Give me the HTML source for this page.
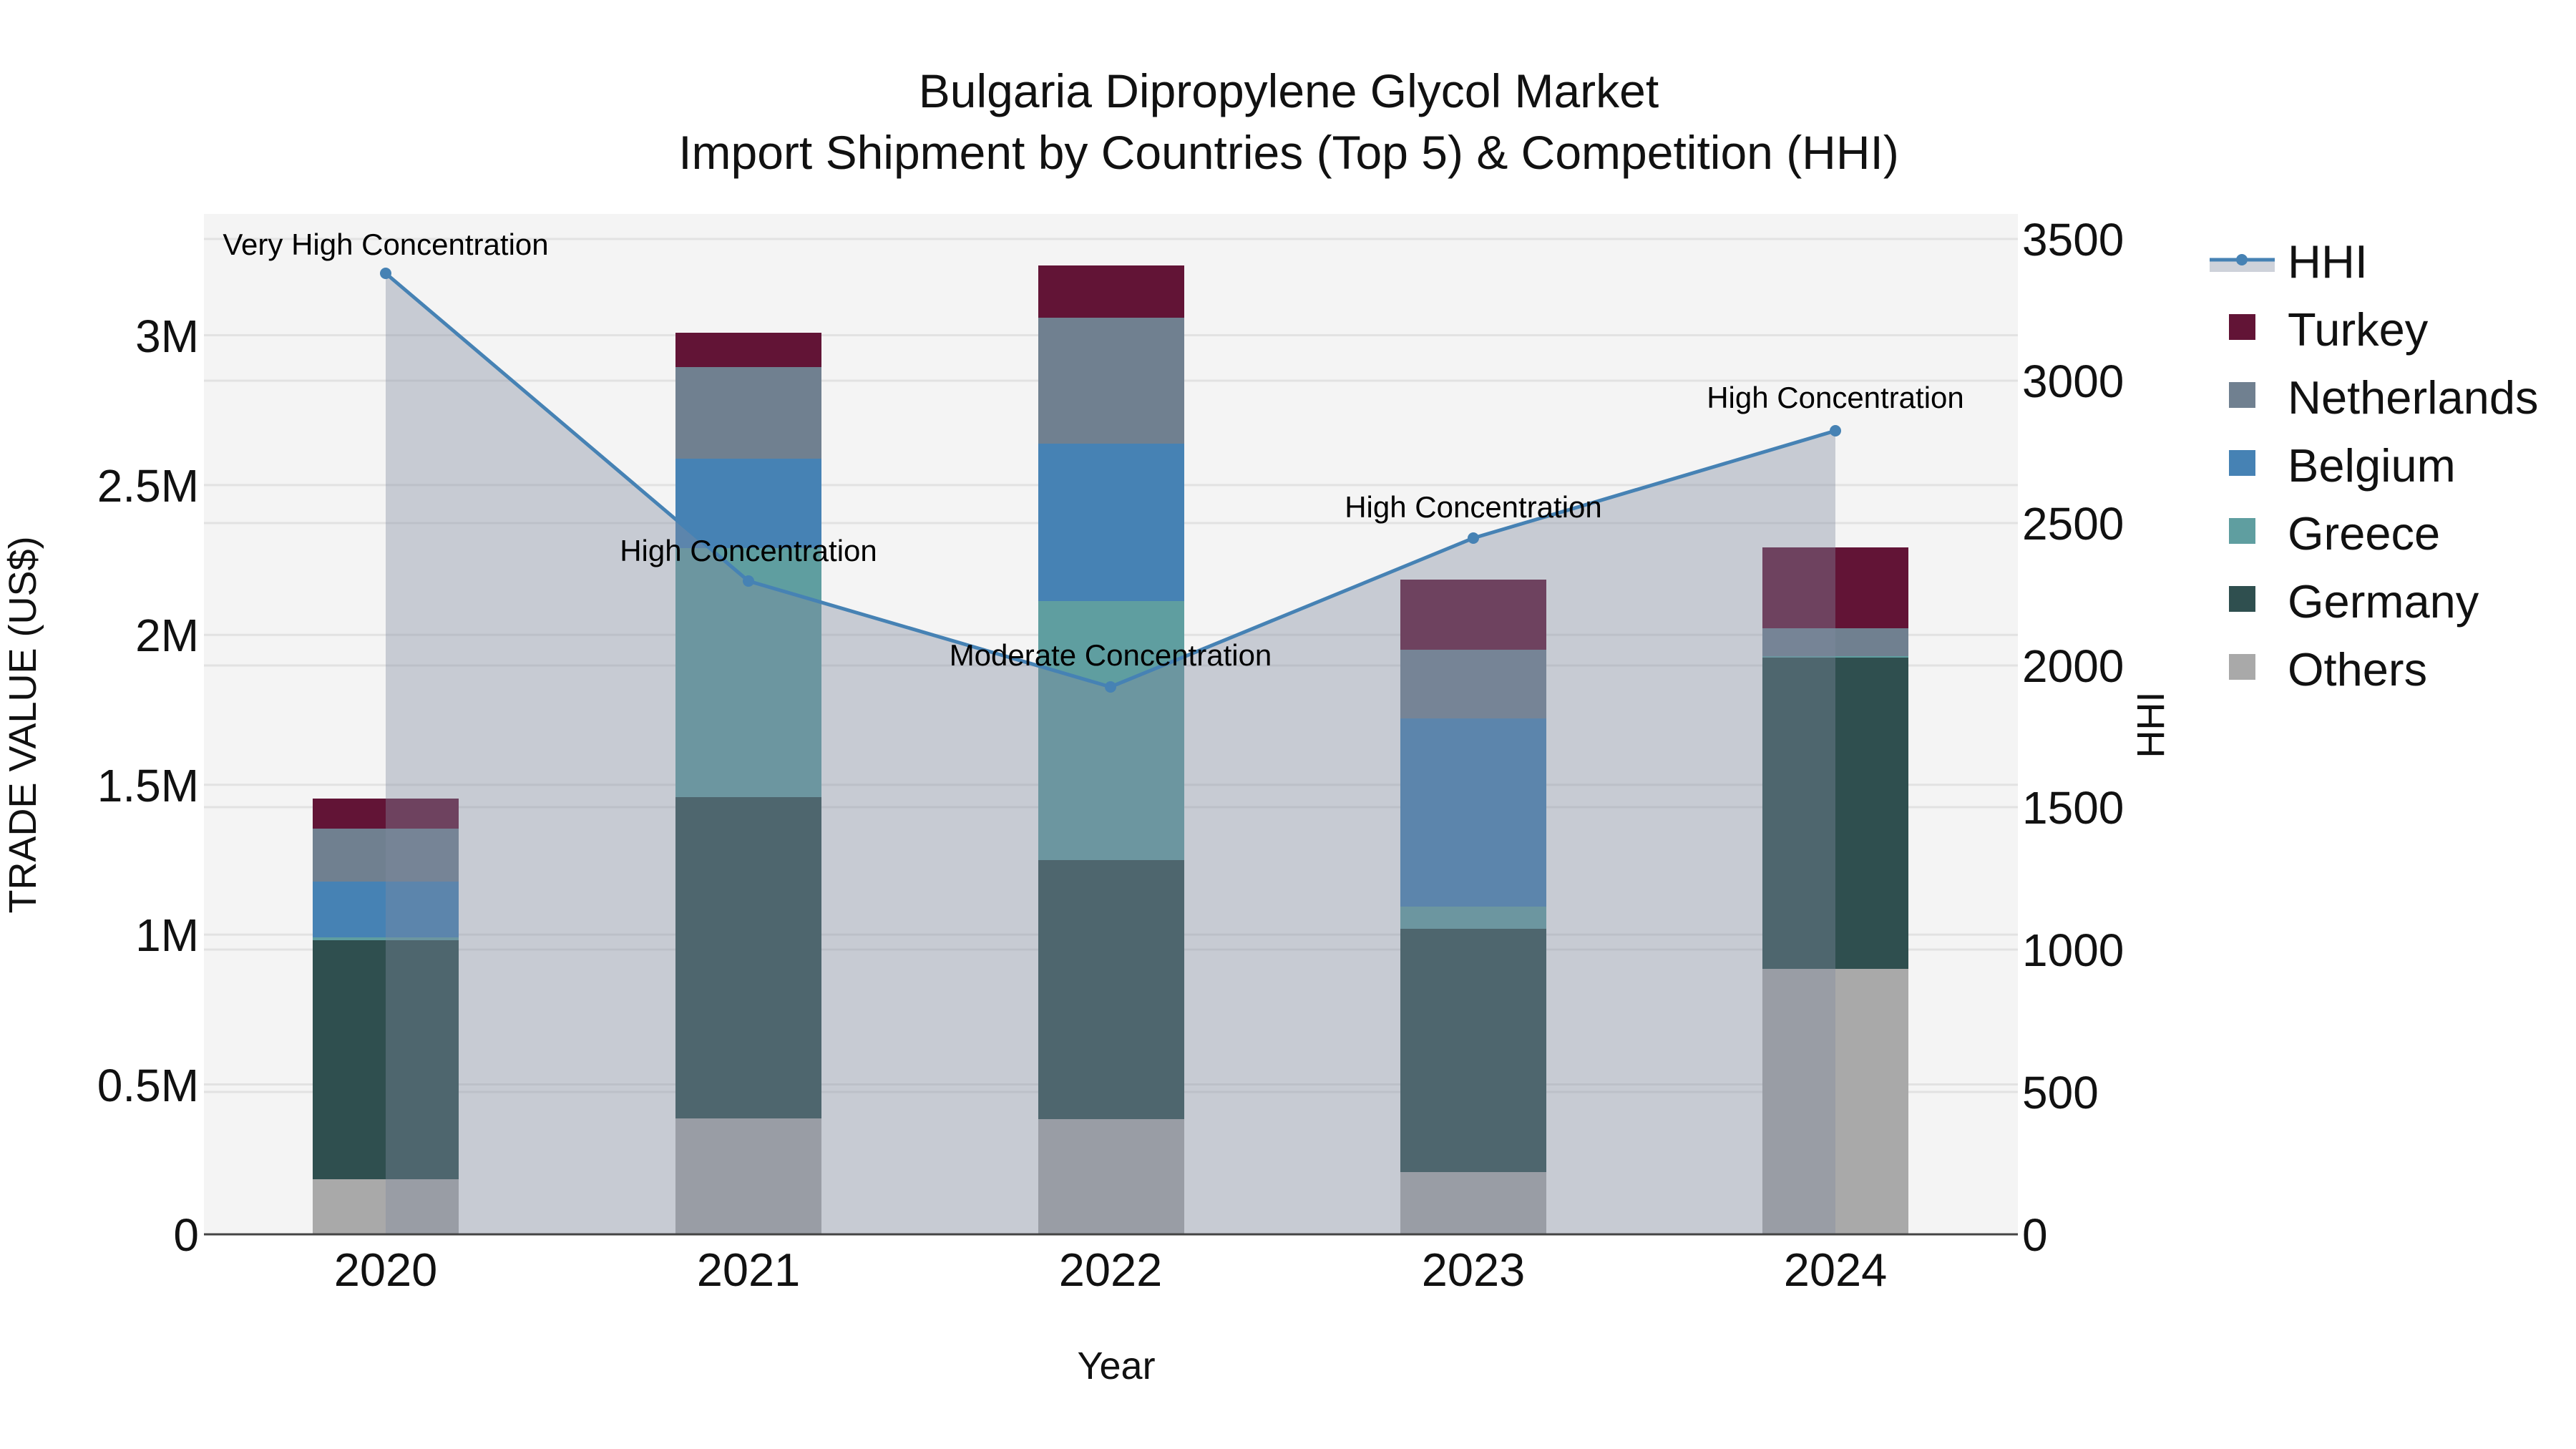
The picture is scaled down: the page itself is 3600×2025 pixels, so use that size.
<!DOCTYPE html>
<html><head><meta charset="utf-8"><style>
html,body{margin:0;padding:0;background:#fff;}
svg{display:block;font-family:"Liberation Sans",sans-serif;}
</style></head><body>
<svg width="3600" height="2025" viewBox="0 0 3600 2025" xmlns="http://www.w3.org/2000/svg">
<rect width="3600" height="2025" fill="#fff"/>
<rect x="285" y="299" width="2535" height="1426" fill="#f4f4f4"/>
<g stroke="#e2e2e2" stroke-width="3">
<line x1="285" x2="2820" y1="468.5" y2="468.5"/>
<line x1="285" x2="2820" y1="677.9" y2="677.9"/>
<line x1="285" x2="2820" y1="887.3" y2="887.3"/>
<line x1="285" x2="2820" y1="1096.7" y2="1096.7"/>
<line x1="285" x2="2820" y1="1306.1" y2="1306.1"/>
<line x1="285" x2="2820" y1="1515.5" y2="1515.5"/>
<line x1="285" x2="2820" y1="334" y2="334"/>
<line x1="285" x2="2820" y1="532" y2="532"/>
<line x1="285" x2="2820" y1="731" y2="731"/>
<line x1="285" x2="2820" y1="930" y2="930"/>
<line x1="285" x2="2820" y1="1128" y2="1128"/>
<line x1="285" x2="2820" y1="1327" y2="1327"/>
<line x1="285" x2="2820" y1="1526" y2="1526"/>
</g>
<g>
<rect x="437" y="1648" width="204" height="77" fill="#a9a9a9"/>
<rect x="437" y="1314" width="204" height="334" fill="#2f4f4f"/>
<rect x="437" y="1310" width="204" height="4" fill="#5f9ea0"/>
<rect x="437" y="1232" width="204" height="78" fill="#4682b4"/>
<rect x="437" y="1158" width="204" height="74" fill="#708090"/>
<rect x="437" y="1116" width="204" height="42" fill="#621436"/>
<rect x="944" y="1563" width="204" height="162" fill="#a9a9a9"/>
<rect x="944" y="1114" width="204" height="449" fill="#2f4f4f"/>
<rect x="944" y="766" width="204" height="348" fill="#5f9ea0"/>
<rect x="944" y="641" width="204" height="125" fill="#4682b4"/>
<rect x="944" y="513" width="204" height="128" fill="#708090"/>
<rect x="944" y="465" width="204" height="48" fill="#621436"/>
<rect x="1451" y="1564" width="204" height="161" fill="#a9a9a9"/>
<rect x="1451" y="1202" width="204" height="362" fill="#2f4f4f"/>
<rect x="1451" y="840" width="204" height="362" fill="#5f9ea0"/>
<rect x="1451" y="620" width="204" height="220" fill="#4682b4"/>
<rect x="1451" y="444" width="204" height="176" fill="#708090"/>
<rect x="1451" y="371" width="204" height="73" fill="#621436"/>
<rect x="1957" y="1638" width="204" height="87" fill="#a9a9a9"/>
<rect x="1957" y="1298" width="204" height="340" fill="#2f4f4f"/>
<rect x="1957" y="1267" width="204" height="31" fill="#5f9ea0"/>
<rect x="1957" y="1004" width="204" height="263" fill="#4682b4"/>
<rect x="1957" y="908" width="204" height="96" fill="#708090"/>
<rect x="1957" y="810" width="204" height="98" fill="#621436"/>
<rect x="2463" y="1354" width="204" height="371" fill="#a9a9a9"/>
<rect x="2463" y="919" width="204" height="435" fill="#2f4f4f"/>
<rect x="2463" y="917" width="204" height="2" fill="#5f9ea0"/>
<rect x="2463" y="878" width="204" height="39" fill="#708090"/>
<rect x="2463" y="765" width="204" height="113" fill="#621436"/>
</g>
<polygon points="539,1725 539,382 1046,812 1552,960 2059,752 2565,602 2565,1725" fill="rgb(130,140,159)" fill-opacity="0.39"/>
<polyline points="539,382 1046,812 1552,960 2059,752 2565,602" fill="none" stroke="#4682b4" stroke-width="5"/>
<g fill="#4682b4">
<circle cx="539" cy="382" r="8"/><circle cx="1046" cy="812" r="8"/><circle cx="1552" cy="960" r="8"/><circle cx="2059" cy="752" r="8"/><circle cx="2565" cy="602" r="8"/>
</g>
<line x1="285" x2="2820" y1="1725" y2="1725" stroke="#444" stroke-width="3"/>
<g font-size="42" text-anchor="middle" fill="#000">
<text x="539" y="356">Very High Concentration</text>
<text x="1046" y="784">High Concentration</text>
<text x="1552" y="930">Moderate Concentration</text>
<text x="2059" y="723">High Concentration</text>
<text x="2565" y="570">High Concentration</text>
</g>
<g font-size="64" text-anchor="end" fill="#111">
<text x="278" y="1748">0</text>
<text x="278" y="1539">0.5M</text>
<text x="278" y="1329">1M</text>
<text x="278" y="1120">1.5M</text>
<text x="278" y="910">2M</text>
<text x="278" y="701">2.5M</text>
<text x="278" y="492">3M</text>
</g>
<g font-size="64" text-anchor="start" fill="#111">
<text x="2826" y="1748">0</text>
<text x="2826" y="1549">500</text>
<text x="2826" y="1350">1000</text>
<text x="2826" y="1151">1500</text>
<text x="2826" y="953">2000</text>
<text x="2826" y="754">2500</text>
<text x="2826" y="555">3000</text>
<text x="2826" y="357">3500</text>
</g>
<g font-size="65" text-anchor="middle" fill="#111">
<text x="539" y="1797">2020</text>
<text x="1046" y="1797">2021</text>
<text x="1552" y="1797">2022</text>
<text x="2059" y="1797">2023</text>
<text x="2565" y="1797">2024</text>
</g>
<text x="1560" y="1927" font-size="54" text-anchor="middle" fill="#111">Year</text>
<text transform="translate(50,1013) rotate(-90)" font-size="54" text-anchor="middle" fill="#111">TRADE VALUE (US$)</text>
<text transform="translate(3024,1013) rotate(-90)" font-size="54" text-anchor="middle" fill="#111">HHI</text>
<g font-size="66" text-anchor="middle" fill="#111">
<text x="1801" y="150">Bulgaria Dipropylene Glycol Market</text>
<text x="1801" y="236">Import Shipment by Countries (Top 5) &amp; Competition (HHI)</text>
</g>
<rect x="3088" y="363" width="91" height="17" fill="rgb(130,140,159)" fill-opacity="0.39"/>
<line x1="3088" x2="3179" y1="363" y2="363" stroke="#4682b4" stroke-width="5"/>
<circle cx="3133" cy="363" r="8" fill="#4682b4"/>
<rect x="3115" y="439" width="37" height="36" fill="#621436"/>
<rect x="3115" y="534" width="37" height="36" fill="#708090"/>
<rect x="3115" y="629" width="37" height="36" fill="#4682b4"/>
<rect x="3115" y="724" width="37" height="36" fill="#5f9ea0"/>
<rect x="3115" y="819" width="37" height="36" fill="#2f4f4f"/>
<rect x="3115" y="914" width="37" height="36" fill="#a9a9a9"/>
<g font-size="65" fill="#111">
<text x="3197" y="388">HHI</text>
<text x="3197" y="483">Turkey</text>
<text x="3197" y="578">Netherlands</text>
<text x="3197" y="673">Belgium</text>
<text x="3197" y="768">Greece</text>
<text x="3197" y="863">Germany</text>
<text x="3197" y="958">Others</text>
</g>
</svg>
</body></html>
